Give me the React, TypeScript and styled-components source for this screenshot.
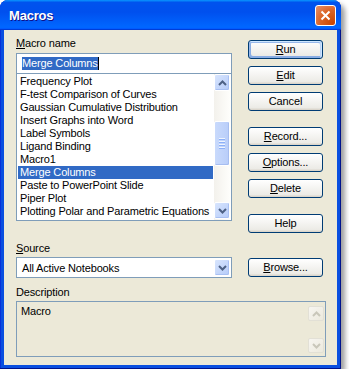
import React from 'react';
import styled, { createGlobalStyle, css } from 'styled-components';

const GlobalStyle = createGlobalStyle`
  html, body {
    margin: 0;
    padding: 0;
    background: #fff;
  }
  body {
    font-family: "Liberation Sans", Arial, sans-serif;
    font-size: 11px;
    letter-spacing: -0.15px;
    color: #000;
  }
`;

// Ventana
const Window = styled.div`
  width: 341px;
  box-sizing: border-box;
  border-radius: 8px 8px 0 0;
  background: #0A4FE0;
  box-shadow: inset -1px -1px #00138C, inset 1px 0 #0831D9, 4px 4px 5px rgba(0, 0, 0, 0.38);
  display: flex;
  flex-direction: column;
`;

const TitleBar = styled.div`
  height: 30px;
  box-sizing: border-box;
  display: flex;
  align-items: center;
  justify-content: space-between;
  padding: 0 5px 0 9px;
  border-radius: 8px 8px 0 0;
  background: linear-gradient(
    180deg,
    #0997ff 0%,
    #0053ee 8%,
    #0050ee 40%,
    #0066ff 88%,
    #0066ff 93%,
    #005bff 95%,
    #003dd7 96%,
    #003dd7 100%
  );
`;

const Title = styled.span`
  font-family: "Liberation Sans", Arial, sans-serif;
  font-weight: bold;
  font-size: 13px;
  color: #fff;
  text-shadow: 1px 1px #0f1089;
  letter-spacing: -0.2px;
`;

const CloseButton = styled.div`
  width: 21px;
  height: 21px;
  box-sizing: border-box;
  border: 1px solid #fff;
  border-radius: 3px;
  background: radial-gradient(circle at 90% 90%, #cc4600 0%, #dc6527 55%, #e5926f 100%);
  display: flex;
  align-items: center;
  justify-content: center;
`;

const Body = styled.div`
  margin: 0 4px 4px;
  background: #ece9d8;
  padding: 7px 14px 8px 12px;
  display: flex;
  flex-direction: column;
`;

const TopArea = styled.div`
  display: grid;
  grid-template-columns: 216px 75px;
  column-gap: 16px;
  align-items: start;
`;

const LeftColumn = styled.div`
  display: flex;
  flex-direction: column;
`;

const Label = styled.div<{ $gap?: number }>`
  height: 13px;
  line-height: 13px;
  margin-bottom: ${p => p.$gap ?? 2}px;
`;

const Key = styled.span`
  text-decoration: underline;
  text-underline-offset: 1px;
`;

const TextInput = styled.div`
  height: 21px;
  box-sizing: border-box;
  border: 1px solid #7f9db9;
  background: #fff;
  display: flex;
  align-items: center;
  padding-left: 5px;
`;

const SelectedText = styled.span`
  background: #316ac5;
  color: #fff;
  line-height: 13px;
  border-right: 1px solid #000;
`;

const ListBox = styled.div`
  height: 147px;
  box-sizing: border-box;
  border: 1px solid #7f9db9;
  border-top: none;
  background: #fff;
  display: flex;
`;

const Rows = styled.div`
  flex: 1;
  padding: 1px 1px 0;
  overflow: hidden;
`;

const Row = styled.div<{ $selected?: boolean }>`
  height: 13px;
  line-height: 13px;
  padding-left: 2px;
  white-space: nowrap;
  ${p =>
    p.$selected &&
    css`
      background: #316ac5;
      color: #fff;
    `}
`;

const ScrollBar = styled.div<{ $pad?: string }>`
  width: 16px;
  margin: 0 1px 0 0;
  padding: ${p => p.$pad ?? '0'};
  display: flex;
  flex-direction: column;
  background: linear-gradient(90deg, #f3f1ec, #fefefb);
`;

const ScrollButton = styled.div<{ $disabled?: boolean; $h?: number }>`
  width: 16px;
  height: ${p => p.$h ?? 17}px;
  box-sizing: border-box;
  border: 1px solid ${p => (p.$disabled ? '#e2e0d6' : '#fff')};
  border-radius: 2px;
  background: ${p =>
    p.$disabled
      ? 'linear-gradient(135deg, #f7f6f1, #ece9dd)'
      : 'linear-gradient(135deg, #d8e5fd, #b5cbf9)'};
  box-shadow: ${p => (p.$disabled ? 'none' : 'inset -1px -1px #a8c0f3')};
  display: flex;
  align-items: center;
  justify-content: center;
`;

const Track = styled.div`
  flex: 1;
  display: flex;
  flex-direction: column;
`;

const Thumb = styled.div`
  width: 16px;
  box-sizing: border-box;
  border: 1px solid #fff;
  border-radius: 2px;
  background: linear-gradient(90deg, #c9dafc, #b8cdf9);
  box-shadow: inset -1px -1px #a6bdf0;
  display: flex;
  flex-direction: column;
  align-items: center;
  justify-content: center;
  gap: 1px;
`;

const Grip = styled.div`
  width: 6px;
  height: 1px;
  background: #eef4fe;
  border-bottom: 1px solid #8cb0f8;
`;

const RightColumn = styled.div`
  padding-top: 3px;
  display: flex;
  flex-direction: column;
`;

const ButtonGroup = styled.div`
  display: flex;
  flex-direction: column;
  gap: 7px;
  & + & {
    margin-top: 16px;
  }
`;

const Button = styled.div<{ $default?: boolean }>`
  width: 75px;
  height: 19px;
  box-sizing: border-box;
  border: 1px solid #003c74;
  border-radius: 3px;
  background: linear-gradient(180deg, #fff 0%, #ecebe6 86%, #d6d0c5 100%);
  display: flex;
  align-items: center;
  justify-content: center;
  line-height: 13px;
  ${p =>
    p.$default &&
    css`
      box-shadow: inset -1px 1px #cee7ff, inset 1px 2px #98b8ea, inset -2px 2px #bcd4f6,
        inset 1px -1px #89ade4, inset 2px -2px #89ade4;
    `}
`;

const SourceArea = styled.div`
  margin-top: 9px;
  display: grid;
  grid-template-columns: 216px 75px;
  column-gap: 16px;
  align-items: center;
`;

const Combo = styled.div`
  height: 21px;
  box-sizing: border-box;
  border: 1px solid #7f9db9;
  background: #fff;
  display: flex;
  align-items: center;
  justify-content: space-between;
  padding: 1px 1px 1px 5px;
`;

const DescArea = styled.div`
  margin-top: 8px;
  display: flex;
  flex-direction: column;
`;

const DescBox = styled.div`
  width: 310px;
  height: 56px;
  box-sizing: border-box;
  border: 1px solid #7f9db9;
  display: flex;
  justify-content: space-between;
`;

const DescText = styled.div`
  padding: 3px 4px;
  line-height: 13px;
`;

const DescScroll = styled.div`
  width: 16px;
  margin-right: 1px;
  padding: 4px 0 3px;
  display: flex;
  flex-direction: column;
  justify-content: space-between;
`;

const Chevron = ({ up, color }: { up?: boolean; color: string }) => (
  <svg width="9" height="6" viewBox="0 0 9 6">
    <polyline
      points={up ? '1,5 4.5,1.5 8,5' : '1,1 4.5,4.5 8,1'}
      fill="none"
      stroke={color}
      strokeWidth="2"
    />
  </svg>
);

const macros = [
  'Frequency Plot',
  'F-test Comparison of Curves',
  'Gaussian Cumulative Distribution',
  'Insert Graphs into Word',
  'Label Symbols',
  'Ligand Binding',
  'Macro1',
  'Merge Columns',
  'Paste to PowerPoint Slide',
  'Piper Plot',
  'Plotting Polar and Parametric Equations',
];

const App: React.FC = () => {
  const seleccionado = 'Merge Columns';
  const thumbTop = 30;

  return (
    <>
      <GlobalStyle />
      <Window>
        <TitleBar>
          <Title>Macros</Title>
          <CloseButton>
            <svg width="11" height="11" viewBox="0 0 11 11">
              <path d="M1.5 1.5 L9.5 9.5 M9.5 1.5 L1.5 9.5" stroke="#fff" strokeWidth="2" />
            </svg>
          </CloseButton>
        </TitleBar>
        <Body>
          <TopArea>
            <LeftColumn>
              <Label $gap={3}>
                <Key>M</Key>acro name
              </Label>
              <TextInput>
                <SelectedText>{seleccionado}</SelectedText>
              </TextInput>
              <ListBox>
                <Rows>
                  {macros.map(m => (
                    <Row key={m} $selected={m === seleccionado}>
                      {m}
                    </Row>
                  ))}
                </Rows>
                <ScrollBar $pad="0 0 1px">
                  <ScrollButton>
                    <Chevron up color="#4d6185" />
                  </ScrollButton>
                  <Track>
                    <Thumb style={{ marginTop: thumbTop, height: 45 }}>
                      <Grip />
                      <Grip />
                      <Grip />
                      <Grip />
                    </Thumb>
                  </Track>
                  <ScrollButton>
                    <Chevron color="#4d6185" />
                  </ScrollButton>
                </ScrollBar>
              </ListBox>
            </LeftColumn>
            <RightColumn>
              <ButtonGroup>
                <Button $default>
                  <span>
                    <Key>R</Key>un
                  </span>
                </Button>
                <Button>
                  <span>
                    <Key>E</Key>dit
                  </span>
                </Button>
                <Button>Cancel</Button>
              </ButtonGroup>
              <ButtonGroup>
                <Button>
                  <span>
                    <Key>R</Key>ecord...
                  </span>
                </Button>
                <Button>
                  <span>
                    <Key>O</Key>ptions...
                  </span>
                </Button>
                <Button>
                  <span>
                    <Key>D</Key>elete
                  </span>
                </Button>
              </ButtonGroup>
              <ButtonGroup>
                <Button>Help</Button>
              </ButtonGroup>
            </RightColumn>
          </TopArea>

          <SourceArea>
            <Label>
              <Key>S</Key>ource
            </Label>
            <div />
            <Combo>
              <span>All Active Notebooks</span>
              <ScrollButton $h={17}>
                <Chevron color="#4d6185" />
              </ScrollButton>
            </Combo>
            <Button>
              <span>
                <Key>B</Key>rowse...
              </span>
            </Button>
          </SourceArea>

          <DescArea>
            <Label>Description</Label>
            <DescBox>
              <DescText>Macro</DescText>
              <DescScroll>
                <ScrollButton $disabled $h={15}>
                  <Chevron up color="#c9c7ba" />
                </ScrollButton>
                <ScrollButton $disabled $h={15}>
                  <Chevron color="#c9c7ba" />
                </ScrollButton>
              </DescScroll>
            </DescBox>
          </DescArea>
        </Body>
      </Window>
    </>
  );
};

export default App;
